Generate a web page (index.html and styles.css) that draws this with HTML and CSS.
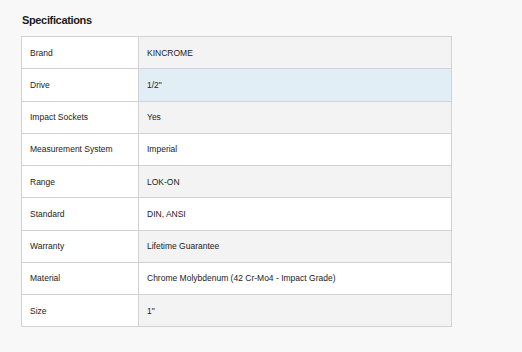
FILE: index.html
```html
<!DOCTYPE html>
<html>
<head>
<meta charset="utf-8">
<link rel="stylesheet" href="styles.css">
</head>
<body>
<section class="specs">
  <h2 class="specs-title">Specifications</h2>
  <table class="specs-table">
    <tbody>
      <tr><td class="label">Brand</td><td class="value">KINCROME</td></tr>
      <tr class="hover"><td class="label">Drive</td><td class="value">1/2"</td></tr>
      <tr><td class="label">Impact Sockets</td><td class="value">Yes</td></tr>
      <tr><td class="label">Measurement System</td><td class="value">Imperial</td></tr>
      <tr><td class="label">Range</td><td class="value">LOK-ON</td></tr>
      <tr><td class="label">Standard</td><td class="value">DIN, ANSI</td></tr>
      <tr><td class="label">Warranty</td><td class="value">Lifetime Guarantee</td></tr>
      <tr><td class="label">Material</td><td class="value">Chrome Molybdenum (42 Cr-Mo4 - Impact Grade)</td></tr>
      <tr><td class="label">Size</td><td class="value">1"</td></tr>
    </tbody>
  </table>
</section>
</body>
</html>
```

FILE: styles.css
```css
html, body {
  margin: 0;
  padding: 0;
  background: #f8f8f8;
}
body {
  font-family: "Liberation Sans", Arial, sans-serif;
  color: #222;
}
.specs {
  padding: 12px 0 0 21px;
}
.specs-title {
  margin: 0 0 8px 1px;
  font-size: 11px;
  font-weight: bold;
  line-height: 16px;
  letter-spacing: -0.35px;
  color: #1a1a1a;
}
.specs-table {
  border-collapse: collapse;
  width: 431px;
  font-size: 8.5px;
}
.specs-table td {
  border: 1px solid #d2d2d2;
  height: 32.25px;
  padding: 0 8px;
  vertical-align: middle;
  box-sizing: border-box;
}
.specs-table .label {
  width: 117px;
  background: #fff;
}
.specs-table .value {
  background: #fff;
}
.specs-table tr:nth-child(odd) .value {
  background: #f3f3f3;
}
.specs-table tr.hover .value {
  background: #e2eef6;
}
```
